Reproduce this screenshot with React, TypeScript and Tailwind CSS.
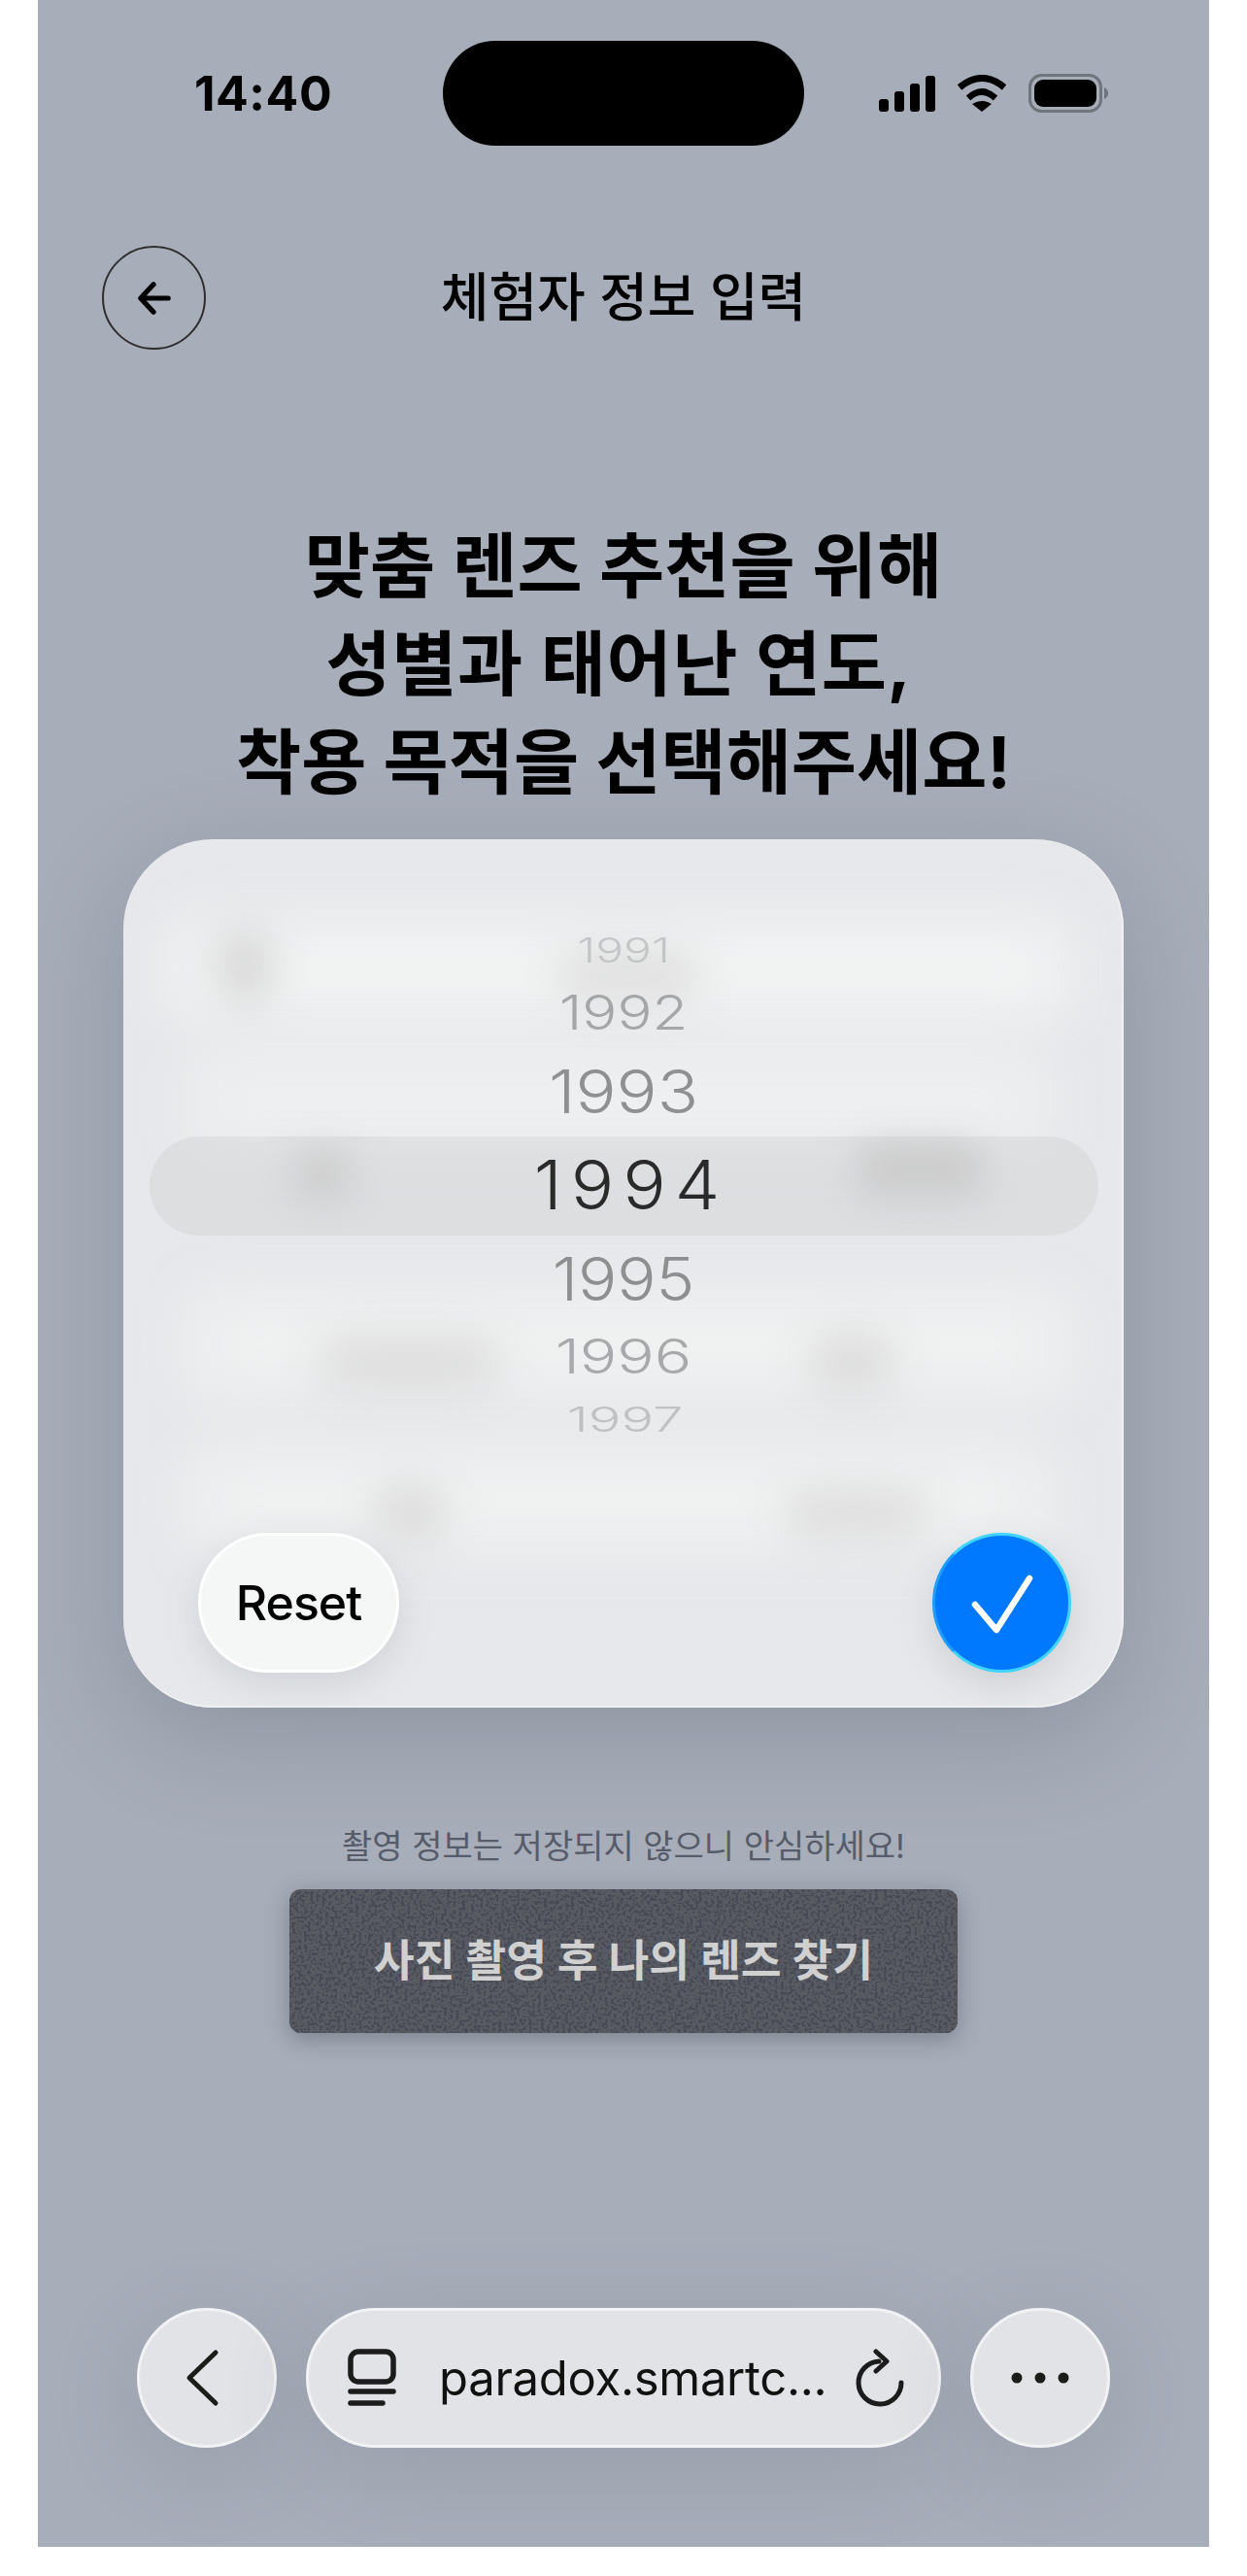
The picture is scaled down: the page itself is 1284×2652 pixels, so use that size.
const ko = '[font-family:Inter,"Noto_Sans_CJK_KR",sans-serif]';

const years = [
  { y: "1991", row: "h-[64px]", cls: "text-[48px] scale-y-[0.74] text-[#c4c5c7]" },
  { y: "1992", row: "h-[64px]", cls: "text-[60px] scale-y-[0.81] text-[#a5a6a8]" },
  { y: "1993", row: "h-[100px]", cls: "text-[70px] scale-y-[0.88] text-[#8f9092]" },
  { y: "1994", row: "h-[92px] pl-[16px]", cls: "text-[74px] scale-y-[0.94] tracking-[9px] text-[#2a2a2a]" },
  { y: "1995", row: "h-[100px]", cls: "text-[67px] scale-y-[0.92] text-[#8e8f91]" },
  { y: "1996", row: "h-[60px]", cls: "text-[64px] scale-y-[0.77] text-[#a8a9ab]" },
  { y: "1997", row: "h-[70px] pl-[3px]", cls: "text-[56px] scale-y-[0.63] text-[#c0c1c3]" },
];

function Signal() {
  return (
    <svg width="58" height="37" viewBox="0 0 58 37" fill="#000">
      <rect x="0" y="24" width="10" height="13" rx="3" />
      <rect x="16" y="16" width="10" height="21" rx="3" />
      <rect x="32" y="8" width="10" height="29" rx="3" />
      <rect x="48" y="0" width="10" height="37" rx="3" />
    </svg>
  );
}

function Wifi() {
  return (
    <svg width="52" height="38" viewBox="0 0 52 38" fill="none" stroke="#000">
      <path d="M3 13Q26-6 49 13" strokeWidth="7" />
      <path d="M12 24Q26 11 40 24" strokeWidth="6.5" />
      <path d="M16 30Q26 24 36 30L26 38Z" fill="#000" stroke="none" />
    </svg>
  );
}

function Battery() {
  return (
    <svg width="82" height="40" viewBox="0 0 82 40">
      <rect x="1.5" y="1.5" width="73" height="37" rx="12" fill="none" stroke="#6f747d" strokeWidth="3" />
      <rect x="6" y="6" width="64" height="28" rx="9" fill="#000" />
      <path d="M78 14Q82 16 82 20Q82 24 78 26Z" fill="#6f747d" />
    </svg>
  );
}

export default function App() {
  return (
    <div className={`w-[1284px] h-[2652px] bg-white ${ko}`}>
      <div className="ml-[39px] w-[1206px] h-[2622px] bg-[#a7adb9] flex flex-col overflow-hidden text-black">
        <div className="pt-[42px] grid grid-cols-[1fr_372px_1fr] items-center">
          <div className="pl-[161px] text-[50px] font-bold leading-none tracking-[0.5px]">14:40</div>
          <div className="h-[108px] rounded-full bg-black" />
          <div className="pl-[77px] flex items-center">
            <Signal />
            <div className="ml-[22px]"><Wifi /></div>
            <div className="ml-[22px]"><Battery /></div>
          </div>
        </div>

        <div className="mt-[103px] px-[66px] grid grid-cols-[107px_1fr_107px] items-center">
          <div className="w-[107px] h-[107px] rounded-full border-2 border-[#2e2e2e] flex items-center justify-center">
            <svg width="34" height="34" viewBox="0 0 36 36" fill="none" stroke="#000" strokeWidth="5.5" strokeLinecap="round" strokeLinejoin="round">
              <path d="M17 3 3 18l14 15M4 18h29" />
            </svg>
          </div>
          <div className="text-center text-[54px] font-medium leading-[70px]">체험자 정보 입력</div>
          <div />
        </div>

        <h1 className="mt-[172px] text-center text-[73px] font-bold leading-[101px]">
          <div>맞춤 렌즈 추천을 위해</div>
          <div className="pr-[10px] tracking-[0.6px]">성별과 태어난 연도,</div>
          <div>착용 목적을 선택해주세요!</div>
        </h1>

        <div className="relative mt-[29px] mx-[88px] h-[894px] rounded-[92px] bg-[#e6e8eb] shadow-[0_30px_100px_rgba(90,96,110,0.3)] flex flex-col">
          <div className="absolute inset-0 rounded-[92px] overflow-hidden border-b-2 border-r-2 border-[#eef0f1]">
            <div className="absolute left-[50px] top-[85px] w-[920px] h-[100px] bg-[#f2f3f3] blur-[30px]" />
            <div className="absolute left-[70px] top-[225px] w-[880px] h-[90px] bg-[#eff0f1] blur-[32px]" />
            <div className="absolute left-[70px] top-[470px] w-[900px] h-[100px] bg-[#f0f1f1] blur-[32px]" />
            <div className="absolute left-[70px] top-[630px] w-[880px] h-[100px] bg-[#f0f1f1] blur-[32px]" />
            <div className="absolute left-[95px] top-[90px] w-[60px] h-[80px] rounded-full bg-[#d9d9d9] blur-[20px]" />
            <div className="absolute left-[445px] top-[110px] w-[150px] h-[60px] rounded-full bg-[#e1e1e1] blur-[20px]" />
            <div className="absolute left-[170px] top-[315px] w-[70px] h-[60px] rounded-full bg-[#d9d9d9] blur-[18px]" />
            <div className="absolute left-[750px] top-[310px] w-[140px] h-[60px] rounded-full bg-[#d6d6d6] blur-[18px]" />
            <div className="absolute left-[200px] top-[510px] w-[190px] h-[60px] rounded-full bg-[#dedede] blur-[22px]" />
            <div className="absolute left-[705px] top-[505px] w-[90px] h-[70px] rounded-full bg-[#dedede] blur-[20px]" />
            <div className="absolute left-[255px] top-[660px] w-[80px] h-[70px] rounded-full bg-[#dedede] blur-[20px]" />
            <div className="absolute left-[680px] top-[665px] w-[150px] h-[60px] rounded-full bg-[#e0e0e0] blur-[20px]" />
            <div className="absolute left-[27px] top-[306px] w-[977px] h-[102px] rounded-full bg-black/[0.045]" />
          </div>

          <div className="relative pt-[82px] flex flex-col items-center">
            {years.map((r) => (
              <div key={r.y} className={`${r.row} flex items-center justify-center`}>
                <span className={`${r.cls} font-[350] leading-none`}>{r.y}</span>
              </div>
            ))}
          </div>

          <div className="relative mt-[82px] pl-[77px] pr-[54px] flex items-center justify-between">
            <div className="w-[207px] h-[144px] rounded-full bg-[#f5f6f6] border-[3px] border-white shadow-[0_12px_36px_rgba(110,115,125,0.18)] flex items-center justify-center text-[50px] font-medium tracking-[-1px]">
              Reset
            </div>
            <div className="w-[143px] h-[144px] rounded-full bg-[#0079fe] border-[3px] border-t-[#3fd4ff] border-r-[#3fd4ff] border-b-[#3fd4ff] border-l-[#1e9cff] shadow-[0_12px_36px_rgba(110,115,125,0.2)] flex items-center justify-center">
              <svg width="72" height="64" viewBox="0 0 72 64" fill="none" stroke="#fff" strokeWidth="6.5" strokeLinecap="round" strokeLinejoin="round">
                <path d="M8 34 30 60 64 7" />
              </svg>
            </div>
          </div>
        </div>

        <div className="mt-[118px] text-center text-[34px] leading-[50px] text-[#565c69]">
          촬영 정보는 저장되지 않으니 안심하세요!
        </div>

        <div className="relative mt-[19px] mx-auto w-[688px] h-[148px] rounded-[12px] bg-[#585b62] overflow-hidden shadow-[0_6px_24px_rgba(60,65,75,0.4)] flex items-center justify-center">
          <svg className="absolute inset-0" width="688" height="148">
            <filter id="grain" colorInterpolationFilters="sRGB">
              <feTurbulence type="fractalNoise" baseFrequency="0.32" numOctaves="2" seed="4" />
              <feColorMatrix values="0 0 0 0 0.28  0 0 0 0 0.29  0 0 0 0 0.33  0 0 0 9 -4.4" />
            </filter>
            <rect width="688" height="148" filter="url(#grain)" />
          </svg>
          <span className="relative text-[45.5px] font-bold text-[#d0d0d0]">사진 촬영 후 나의 렌즈 찾기</span>
        </div>

        <div className="mt-auto pb-[102px] flex justify-center gap-[30px]">
          <div className="w-[144px] h-[144px] rounded-full bg-[#e1e3e7] border-[3px] border-[#f1f2f4] shadow-[0_20px_90px_rgba(90,96,110,0.18)] flex items-center justify-center">
            <svg className="mr-[8px]" width="36" height="60" viewBox="0 0 36 60" fill="none" stroke="#1c1c1c" strokeWidth="5" strokeLinecap="round" strokeLinejoin="round">
              <path d="M31 4 4 30l27 26" />
            </svg>
          </div>
          <div className="w-[654px] h-[144px] rounded-full bg-[#e1e3e7] border-[3px] border-[#f1f2f4] shadow-[0_20px_90px_rgba(90,96,110,0.18)] pl-[40px] pr-[32px] flex items-center justify-between">
            <div className="flex items-center gap-[44px]">
              <svg width="50" height="60" viewBox="0 0 50 60" fill="none" stroke="#1c1c1c" strokeWidth="5.5" strokeLinecap="round">
                <rect x="3" y="3" width="44" height="31" rx="8" />
                <path d="M3 44h44M3 56h33" />
              </svg>
              <span className="text-[49px] leading-none text-[#111] tracking-[-0.3px]">paradox.smartc...</span>
            </div>
            <svg width="56" height="60" viewBox="0 0 56 60" fill="none" stroke="#1c1c1c" strokeWidth="5" strokeLinecap="round" strokeLinejoin="round">
              <path d="M27 13A22 22 0 1 0 50 35" />
              <path d="M24 3 35 13 24 23" />
            </svg>
          </div>
          <div className="w-[144px] h-[144px] rounded-full bg-[#e1e3e7] border-[3px] border-[#f1f2f4] shadow-[0_20px_90px_rgba(90,96,110,0.18)] flex items-center justify-center">
            <svg width="60" height="12" viewBox="0 0 60 12" fill="#1c1c1c">
              <circle cx="6" cy="6" r="5.5" />
              <circle cx="30" cy="6" r="5.5" />
              <circle cx="54" cy="6" r="5.5" />
            </svg>
          </div>
        </div>
      </div>
    </div>
  );
}
